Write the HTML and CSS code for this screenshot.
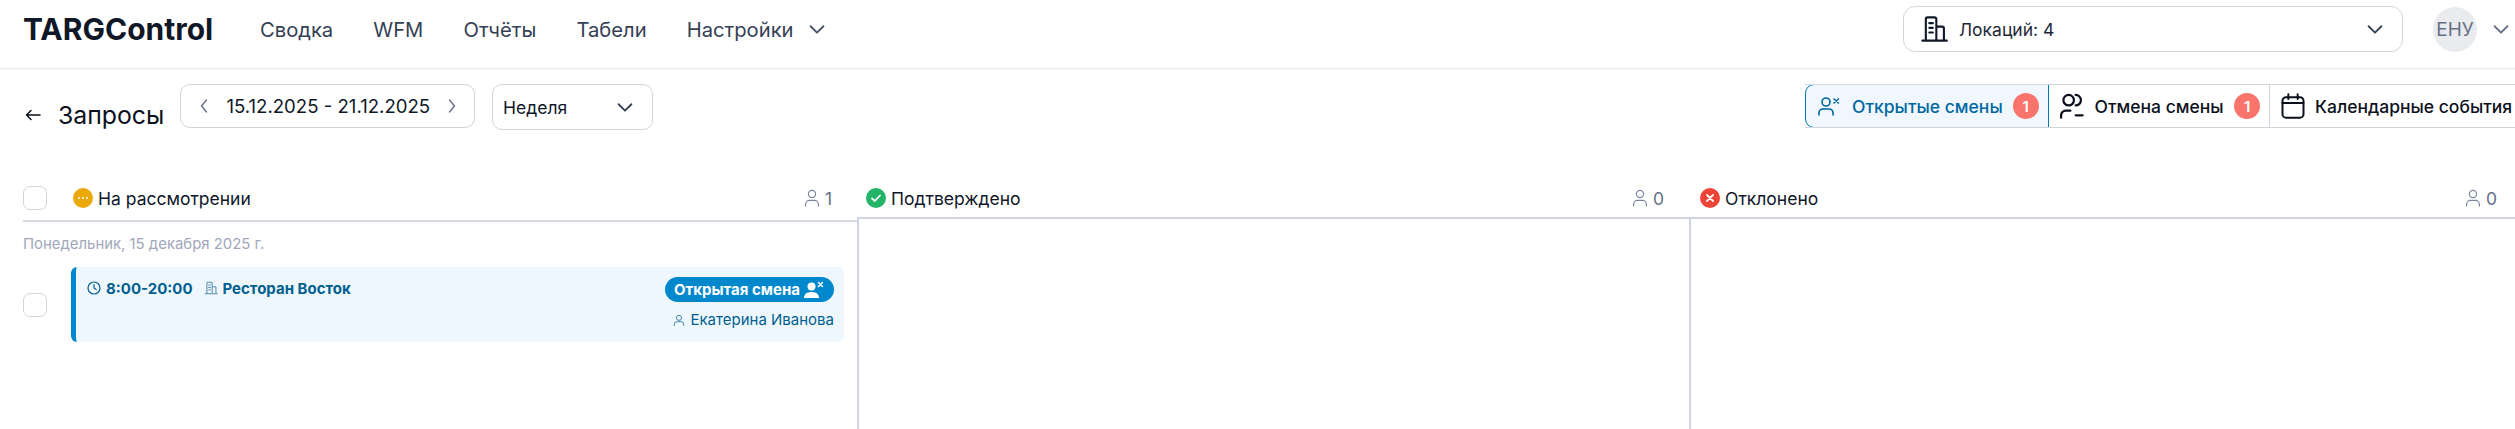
FILE: index.html
```html
<!DOCTYPE html>
<html lang="ru">
<head>
<meta charset="utf-8">
<title>Запросы</title>
<link rel="stylesheet" href="styles.css">
</head>
<body>
<svg class="defs" width="0" height="0">
  <symbol id="chev" viewBox="0 0 24 24"><path d="M5 9l7 7 7-7" fill="none" stroke="currentColor" stroke-width="2" stroke-linecap="round" stroke-linejoin="round"/></symbol>
  <symbol id="bld" viewBox="0 0 24 24"><path d="M2 22h21M5 22V3.500A1.500 1.500 0 0 1 6.500 2h6A1.500 1.500 0 0 1 14 3.500V22M14 10h5a1.500 1.500 0 0 1 1.500 1.500V22M8 7h3M8 11h3M8 15h3" fill="none" stroke="currentColor" stroke-width="1.800" stroke-linecap="round" stroke-linejoin="round"/></symbol>
  <symbol id="usr" viewBox="0 0 20 24"><circle cx="10" cy="7" r="4.500" fill="none" stroke="currentColor" stroke-width="1.500"/><path d="M2 22v-2a5 5 0 0 1 5-5h6a5 5 0 0 1 5 5v2" fill="none" stroke="currentColor" stroke-width="1.500" stroke-linecap="round"/></symbol>
</svg>
<header class="topbar">
  <div class="logo">TARGControl</div>
  <nav class="nav">
    <a class="nav-item">Сводка</a>
    <a class="nav-item">WFM</a>
    <a class="nav-item">Отчёты</a>
    <a class="nav-item">Табели</a>
    <a class="nav-item">Настройки<svg class="nav-chev"><use href="#chev"/></svg></a>
  </nav>
  <div class="loc">
    <svg class="loc-icon"><use href="#bld"/></svg>
    <span class="loc-text">Локаций: 4</span>
    <svg class="loc-chev"><use href="#chev"/></svg>
  </div>
  <div class="avatar">ЕНУ</div>
  <svg class="user-chev"><use href="#chev"/></svg>
</header>
<section class="toolbar">
  <div class="title">
    <svg class="back" viewBox="0 0 16 12"><path d="M15 6H1.500M6 1.500L1.500 6 6 10.500" fill="none" stroke="currentColor" stroke-width="1.500" stroke-linecap="round" stroke-linejoin="round"/></svg>
    <span>Запросы</span>
  </div>
  <div class="range">
    <svg class="range-arrow" viewBox="0 0 10 16"><path d="M7.500 2L2.500 8l5 6" fill="none" stroke="currentColor" stroke-width="1.400" stroke-linecap="round" stroke-linejoin="round"/></svg>
    <span>15.12.2025 - 21.12.2025</span>
    <svg class="range-arrow" viewBox="0 0 10 16"><path d="M2.500 2l5 6-5 6" fill="none" stroke="currentColor" stroke-width="1.400" stroke-linecap="round" stroke-linejoin="round"/></svg>
  </div>
  <div class="period"><span>Неделя</span><svg class="period-chev"><use href="#chev"/></svg></div>
  <div class="tabs">
    <div class="tab tab-active tab-open">
      <svg class="tab-icon" viewBox="0 0 24 24"><circle cx="9" cy="8" r="4" fill="none" stroke="currentColor" stroke-width="1.600"/><path d="M2 21v-2a4 4 0 0 1 4-4h6a4 4 0 0 1 4 4v2M17 5l4.500 4M21.500 5L17 9" fill="none" stroke="currentColor" stroke-width="1.600" stroke-linecap="round"/></svg>
      <span>Открытые смены</span><b class="count">1</b>
    </div>
    <div class="tab tab-cancel">
      <svg class="tab-icon tab-icon-lg" viewBox="0 0 24 24"><circle cx="10" cy="7" r="4.500" fill="none" stroke="currentColor" stroke-width="1.900"/><path d="M16 2.500a4.500 4.500 0 0 1 0 9M3.500 22v-2a4 4 0 0 1 4-4h4M16 20h6" fill="none" stroke="currentColor" stroke-width="1.900" stroke-linecap="round"/></svg>
      <span>Отмена смены</span><b class="count">1</b>
    </div>
    <div class="tab tab-cal">
      <svg class="tab-icon tab-icon-lg" viewBox="0 0 24 24"><rect x="3" y="4.500" width="18" height="17.500" rx="3" fill="none" stroke="currentColor" stroke-width="1.700"/><path d="M3 9.500h18M8 2v4M16 2v4" fill="none" stroke="currentColor" stroke-width="1.700" stroke-linecap="round"/></svg>
      <span>Календарные события</span>
    </div>
  </div>
</section>
<main class="board">
  <section class="col col-first">
    <div class="col-head head-first">
      <span class="check"></span>
      <svg class="status" viewBox="0 0 20 20"><circle cx="10" cy="10" r="10" fill="#eaa906"/><circle cx="6" cy="10" r="1" fill="#fff"/><circle cx="10" cy="10" r="1" fill="#fff"/><circle cx="14" cy="10" r="1" fill="#fff"/></svg>
      <span class="col-name">На рассмотрении</span>
      <span class="col-count"><svg class="count-icon"><use href="#usr"/></svg>1</span>
    </div>
    <div class="date-label">Понедельник, 15 декабря 2025 г.</div>
    <div class="row">
      <span class="check"></span>
      <article class="card">
        <div class="card-line">
          <span class="card-when">
            <svg class="mini" viewBox="0 0 14 14"><circle cx="7" cy="7" r="6" fill="none" stroke="currentColor" stroke-width="1.200"/><path d="M7 3.500V7l2.200 1.500" fill="none" stroke="currentColor" stroke-width="1.200" stroke-linecap="round"/></svg>
            <b class="time">8:00-20:00</b>
            <svg class="mini mini-bld"><use href="#bld"/></svg>
            <b class="place">Ресторан Восток</b>
          </span>
          <span class="pill">Открытая смена
            <svg class="pill-icon" viewBox="0 0 20 18"><circle cx="7.500" cy="5.500" r="4" fill="#fff"/><path d="M0 17c0-4 3-6 7.500-6S15 13 15 17z" fill="#fff"/><path d="M14.500 1.500l4 4M18.500 1.500l-4 4" stroke="#fff" stroke-width="1.500" stroke-linecap="round"/></svg>
          </span>
        </div>
        <div class="person">
          <svg class="person-icon" viewBox="0 0 14 14"><circle cx="7" cy="4.500" r="3" fill="none" stroke="currentColor" stroke-width="1.100"/><path d="M1.500 13.500V12a3 3 0 0 1 3-3h5a3 3 0 0 1 3 3v1.500" fill="none" stroke="currentColor" stroke-width="1.100" stroke-linecap="round"/></svg>
          Екатерина Иванова
        </div>
      </article>
    </div>
  </section>
  <section class="col col-second">
    <div class="col-head head-plain">
      <svg class="status" viewBox="0 0 20 20"><circle cx="10" cy="10" r="10" fill="#22b567"/><path d="M6 10.500l2.800 2.500L14 7.500" fill="none" stroke="#fff" stroke-width="1.800" stroke-linecap="round" stroke-linejoin="round"/></svg>
      <span class="col-name">Подтверждено</span>
      <span class="col-count"><svg class="count-icon"><use href="#usr"/></svg>0</span>
    </div>
    <div class="col-body"></div>
  </section>
  <section class="col col-third">
    <div class="col-head head-plain">
      <svg class="status" viewBox="0 0 20 20"><circle cx="10" cy="10" r="10" fill="#ef4438"/><path d="M7 7l6 6M13 7l-6 6" stroke="#fff" stroke-width="1.800" stroke-linecap="round"/></svg>
      <span class="col-name">Отклонено</span>
      <span class="col-count"><svg class="count-icon"><use href="#usr"/></svg>0</span>
    </div>
    <div class="col-body"></div>
  </section>
</main>
</body>
</html>
```
FILE: styles.css
```css
* { box-sizing: border-box; }
html, body { margin: 0; padding: 0; }
body {
  width: 2515px;
  height: 429px;
  overflow: hidden;
  background: #fff;
  color: #0f172a;
  font-family: Inter, "Liberation Sans", sans-serif;
  font-size: 17.5px;
}
svg { display: block; flex: none; }
.defs { position: absolute; }

.topbar {
  height: 69px;
  display: flex;
  align-items: center;
  padding: 0 3.5px 10px 23px;
  border-bottom: 1px solid #e8eaef;
  box-shadow: 0 1px 2px rgba(16, 24, 40, .04);
}
.logo { width: 237px; font-size: 30px; font-weight: 700; color: #101828; }
.nav { display: flex; gap: 40.1px; }
.nav-item { display: flex; align-items: center; font-size: 20.2px; color: #344054; }
.nav-chev { width: 22px; height: 22px; margin-left: 12px; color: #475467; }
.loc {
  margin-left: auto;
  width: 500px;
  height: 46px;
  display: flex;
  align-items: center;
  padding: 0 16.5px 0 16px;
  border: 1px solid #d0d5dd;
  border-radius: 12px;
  font-size: 17.5px;
  color: #1d2939;
}
.loc-icon { width: 28px; height: 28px; color: #101828; margin-right: 11px; }
.loc-chev { width: 22px; height: 22px; margin-left: auto; color: #344054; }
.avatar {
  width: 44px;
  height: 45px;
  margin-left: 30px;
  border-radius: 50%;
  background: #e9ebef;
  color: #667085;
  font-size: 19px;
  display: flex;
  align-items: center;
  justify-content: center;
}
.user-chev { width: 22px; height: 22px; margin-left: 12.5px; color: #667085; }

.toolbar { height: 100px; display: flex; align-items: flex-start; padding-top: 15px; }
.title { display: flex; align-items: center; gap: 17px; padding: 16px 0 0 25px; width: 180px; font-size: 24.8px; color: #0c111d; }
.back { width: 16px; height: 12px; }
.range {
  width: 295px;
  height: 44px;
  display: flex;
  align-items: center;
  justify-content: space-between;
  padding: 0 16.5px 0 18px;
  border: 1px solid #d0d5dd;
  border-radius: 10px;
  font-size: 18.6px;
  color: #101828;
}
.range-arrow { width: 10px; height: 16px; color: #667085; }
.period {
  width: 161px;
  height: 46px;
  margin-left: 17px;
  display: flex;
  align-items: center;
  justify-content: space-between;
  padding: 0 16px 0 10px;
  border: 1px solid #d0d5dd;
  border-radius: 10px;
  font-size: 17.5px;
  color: #101828;
}
.period-chev { width: 22px; height: 22px; color: #344054; }
.tabs {
  margin-left: auto;
  width: 710px;
  height: 44px;
  display: flex;
  overflow: hidden;
  border-top: 1px solid #d0d5dd;
  border-bottom: 1px solid #d0d5dd;
  font-size: 17.5px;
  font-weight: 500;
}
.tab { display: flex; align-items: center; flex: none; height: 100%; color: #0c111d; }
.tab-open { width: 244px; padding-left: 11px; gap: 11px; }
.tab-cancel { width: 221px; padding-left: 8px; gap: 9.5px; border-right: 1px solid #d0d5dd; }
.tab-cal { padding-left: 8.5px; gap: 8.5px; white-space: nowrap; }
.tab-active {
  color: #0068a0;
  background: #f0f7fe;
  border: 1px solid #0078b4;
  margin-top: -1px;
  height: calc(100% + 2px);
  border-radius: 9px 0 0 9px;
}
.tab-icon { width: 24px; height: 24px; }
.tab-icon-lg { width: 28px; height: 28px; }
.tab-cancel .count { margin-left: 1px; }
.count {
  width: 26px;
  height: 26px;
  margin-left: -1px;
  border-radius: 50%;
  background: #f9756b;
  color: #fff;
  font-size: 15px;
  font-weight: 600;
  display: flex;
  align-items: center;
  justify-content: center;
}

.board { height: 260px; display: flex; overflow: hidden; }
.col { height: 100%; flex: none; display: flex; flex-direction: column; }
.col-first { width: 857px; }
.col-second { width: 832px; }
.col-third { flex: 1; }
.col-head { display: flex; align-items: center; flex: none; }
.col-body { flex: 1; border-left: 2px solid #cfd4e0; }
.head-first { margin: 0 0 0 23px; height: 53px; padding: 7px 25px 0 0; border-bottom: 2px solid #d7dae3; }
.head-plain { height: 50px; padding: 10px 25px 0 9px; border-bottom: 2px solid #cfd4e0; }
.col-third .head-plain { padding: 10px 18px 0 11px; }
.head-first .check { margin-right: 26px; }
.status { width: 20px; height: 20px; margin-right: 5px; }
.col-name { font-size: 17.5px; color: #0f172a; }
.col-count { margin-left: auto; display: flex; align-items: center; gap: 5px; font-size: 17.5px; color: #667085; }
.count-icon { width: 16px; height: 20px; color: #7b869c; }
.check {
  width: 24px;
  height: 24px;
  flex: none;
  display: block;
  border: 1px solid #d0d5dd;
  border-radius: 7px;
  background: #fff;
}
.date-label { margin: 13px 0 0 23px; font-size: 14.9px; line-height: 18px; color: #a1a8bb; }
.row { display: flex; align-items: center; margin: 14px 0 0 23px; gap: 24px; padding-right: 13px; }
.card {
  flex: 1;
  height: 75px;
  padding: 10px 10px 0 11px;
  background: #eff7fe;
  border-left: 5px solid #0088cc;
  border-radius: 6px;
  color: #005f8f;
}
.card-line { display: flex; justify-content: space-between; align-items: center; }
.card-when { display: flex; align-items: center; font-size: 15px; margin-bottom: 3px; }
.mini { width: 14px; height: 14px; }
.mini-bld { margin: 0 5px 0 11px; color: #5a8fb0; }
.time { margin-left: 5px; font-size: 15px; }
.place { font-size: 15px; }
.pill {
  height: 25px;
  width: 169px;
  display: flex;
  align-items: center;
  justify-content: space-between;
  padding: 0 10px 0 9px;
  border-radius: 13px;
  background: #0088cc;
  color: #fff;
  font-size: 15px;
  font-weight: 700;
}
.pill-icon { width: 20px; height: 18px; }
.person { display: flex; justify-content: flex-end; align-items: center; gap: 5px; margin-top: 8px; font-size: 15px; }
.person-icon { width: 12px; height: 12px; color: #3d7fa6; }
```
